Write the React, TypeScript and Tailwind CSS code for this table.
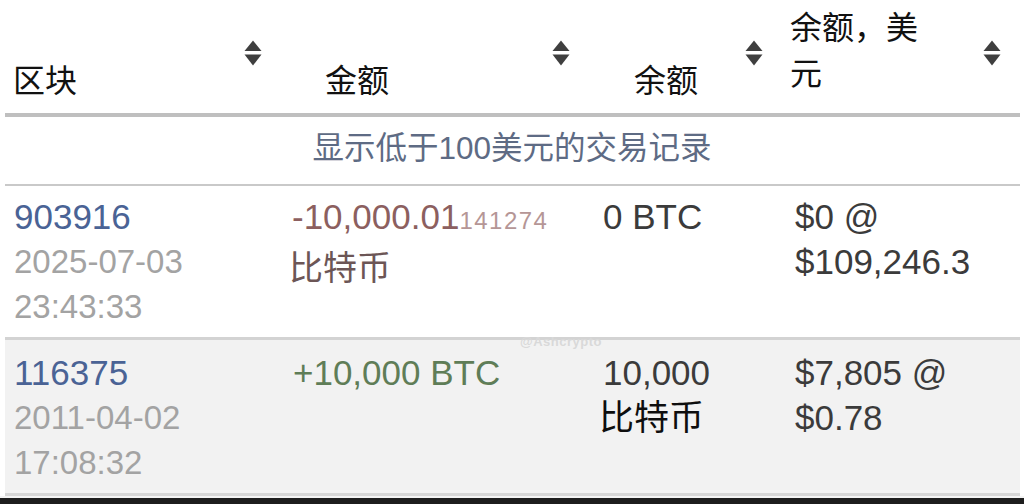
const font = "font-['Liberation_Sans','Noto_Sans_CJK_SC',sans-serif]";

function SortIcon() {
  return (
    <svg width="18" height="26" viewBox="0 0 18 26" className="shrink-0 mt-[40px]">
      <path d="M9 0.5 L17.5 11 H0.5 Z" fill="#3f3f3f" />
      <path d="M0.5 14.5 H17.5 L9 25.5 Z" fill="#3f3f3f" />
    </svg>
  );
}

const headers = [
  { label: "区块", cell: "pl-[13px] pr-[20px]", labelCls: "mt-[58px]" },
  { label: "金额", cell: "pl-[43px] pr-[24px]", labelCls: "mt-[58px]" },
  { label: "余额", cell: "pl-[40px] pr-[17px]", labelCls: "mt-[58px]" },
  { label: "余额，美元", cell: "pl-[10px] pr-[23px]", labelCls: "mt-[5px] w-[140px]" },
];

const cols = "grid grid-cols-[282px_312px_186px_244px]";

export default function App() {
  return (
    <div className={`relative w-[1024px] h-[504px] bg-white overflow-hidden flex flex-col ${font}`}>
      {/* header */}
      <div className={`${cols} h-[113px] shrink-0`}>
        {headers.map((h) => (
          <div key={h.label} className={`flex justify-between items-start ${h.cell}`}>
            <div className={`text-[32px] leading-[46px] text-[#111] ${h.labelCls}`}>{h.label}</div>
            <SortIcon />
          </div>
        ))}
      </div>
      <div className="h-[4px] shrink-0 ml-[5px] mr-[4px] bg-[#bfbfbf]" />

      {/* caption */}
      <div className="h-[67px] shrink-0 flex items-center justify-center pb-[4px] text-[31.5px] text-[#5e6b84]">
        显示低于100美元的交易记录
      </div>
      <div className="h-[2px] shrink-0 ml-[5px] mr-[4px] bg-[#c9c9c9]" />

      {/* row 1 */}
      <div className={`${cols} h-[151px] shrink-0 pt-[8px] leading-[45px]`}>
        <div className="pl-[14px]">
          <div className="text-[35px] text-[#4a6395]">903916</div>
          <div className="text-[33px] text-[#a3a3a3]">2025-07-03</div>
          <div className="text-[33px] text-[#a3a3a3]">23:43:33</div>
        </div>
        <div className="pl-[10px]">
          <div className="whitespace-nowrap">
            <span className="text-[35px] text-[#8c5f5f]">-10,000.01</span>
            <span className="text-[24px] tracking-[1.5px] text-[#b59696]">141274</span>
          </div>
          <div className="text-[34px] text-[#6c5656] -ml-[3px]">比特币</div>
        </div>
        <div className="pl-[9px]">
          <div className="text-[35px] text-[#3b3b3b]">0 BTC</div>
        </div>
        <div className="pl-[15px] text-[35px] text-[#3b3b3b]">
          <div>$0 @</div>
          <div>$109,246.3</div>
        </div>
      </div>
      <div className="h-[3px] shrink-0 ml-[5px] mr-[4px] bg-[#d3d3d3]" />

      {/* row 2 */}
      <div className={`${cols} h-[153px] shrink-0 pt-[10px] leading-[45px] bg-[#f2f2f2] ml-[5px] mr-[4px]`}>
        <div className="pl-[9px]">
          <div className="text-[35px] text-[#4a6395]">116375</div>
          <div className="text-[33px] text-[#a3a3a3]">2011-04-02</div>
          <div className="text-[33px] text-[#a3a3a3]">17:08:32</div>
        </div>
        <div className="pl-[6px]">
          <div className="text-[35px] text-[#5f7d57]">+10,000 BTC</div>
        </div>
        <div className="pl-[0px]">
          <div className="text-[35px] text-[#3b3b3b] pl-[4px]">10,000</div>
          <div className="text-[35px] text-[#0e0e0e]">比特币</div>
        </div>
        <div className="pl-[10px] text-[35px] text-[#3b3b3b]">
          <div>$7,805 @</div>
          <div>$0.78</div>
        </div>
      </div>
      <div className="h-[3px] shrink-0 ml-[5px] mr-[4px] bg-[#d6d6d6]" />
      <div className="h-[2px] shrink-0 bg-[#f4f4f4]" />
      <div className="flex-1 bg-[#1d1d1d]" />

      {/* watermark */}
      <div className="absolute left-[520px] top-[332px] text-[13px] font-bold text-[#d9d9d9] tracking-[0.5px]">
        @Ashcrypto
      </div>
    </div>
  );
}
